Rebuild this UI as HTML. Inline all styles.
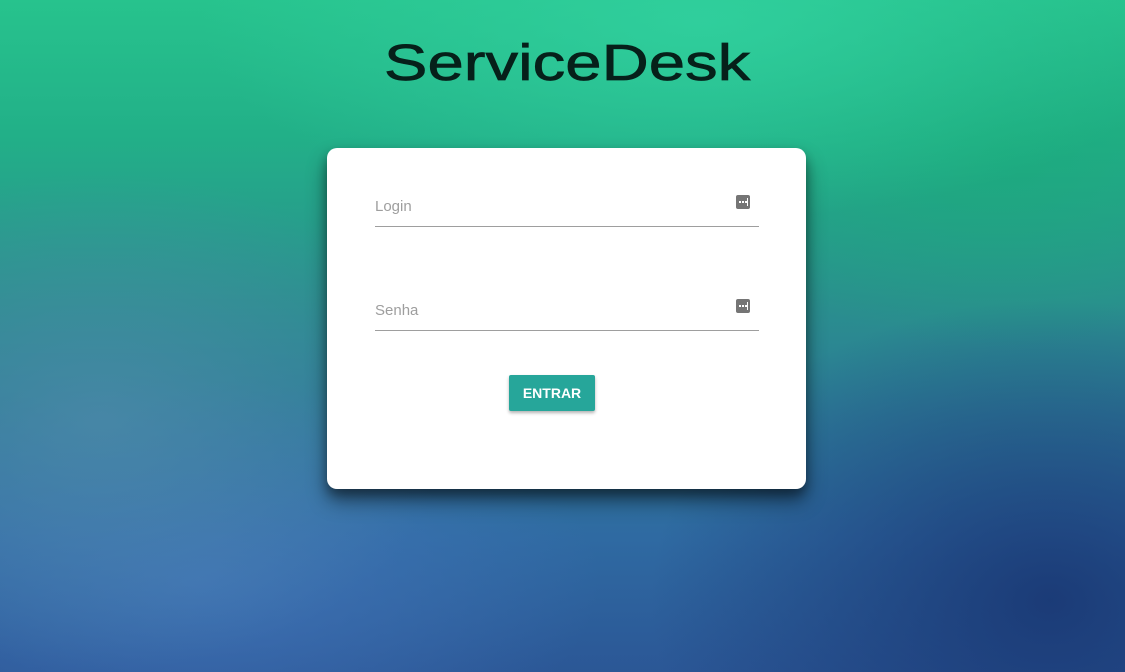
<!DOCTYPE html>
<html><head><meta charset="utf-8"><style>
html,body{margin:0;padding:0;width:1125px;height:672px;overflow:hidden;font-family:"Liberation Sans",sans-serif}
body{position:relative;background:
radial-gradient(ellipse 500px 200px at 700px 20px,rgba(50,210,160,.8),transparent),
radial-gradient(ellipse 350px 250px at 100px 420px,rgba(80,140,170,.7),transparent),
radial-gradient(ellipse 400px 200px at 200px 580px,rgba(70,120,190,.7),transparent),
radial-gradient(ellipse 400px 300px at 1050px 600px,rgba(25,55,115,.9),transparent),
radial-gradient(ellipse 300px 200px at 1000px 150px,rgba(25,170,120,.6),transparent),
linear-gradient(180deg,#27c38d 0%,#22b088 20%,#2a8f8e 45%,#2d7a98 62%,#2f6aa2 80%,#2b5796 100%);}
.title{position:absolute;left:383px;top:37px;width:368px;text-align:center;white-space:nowrap;font-size:51px;line-height:52px;color:#06201a}
.title span{display:inline-block;transform:scaleX(1.28);transform-origin:center;-webkit-text-stroke:0.7px #06201a}
.card{position:absolute;left:327px;top:148px;width:479px;height:341px;background:#fff;border-radius:10px;box-shadow:0 12px 20px rgba(0,0,0,.45),0 6px 10px rgba(0,0,0,.3)}
.f{position:absolute;left:48px;width:384px;height:30px;border-bottom:1px solid #9e9e9e;color:#9e9e9e;font-size:15px}
.f span{position:absolute;left:0;top:2px}
.ic{position:absolute;right:9px;top:-1px;width:14px;height:14px;background:#757575;border-radius:2px}
.ic i{position:absolute;top:6px;width:2px;height:2px;background:#fff}
.btn{position:absolute;left:182px;top:227px;width:86px;height:36px;background:#26a69a;color:#fff;font-size:14px;font-weight:bold;line-height:36px;text-align:center;border-radius:2px;box-shadow:0 2px 3px rgba(0,0,0,.3)}
</style></head><body>
<div class="title"><span>ServiceDesk</span></div>
<div class="card">
<div class="f" style="top:48px"><span>Login</span><div class="ic"><i style="left:3px"></i><i style="left:6px"></i><i style="left:9px"></i><i style="left:11px;top:3px;height:8px;width:1px"></i></div></div>
<div class="f" style="top:152px"><span>Senha</span><div class="ic"><i style="left:3px"></i><i style="left:6px"></i><i style="left:9px"></i><i style="left:11px;top:3px;height:8px;width:1px"></i></div></div>
<div class="btn">ENTRAR</div>
</div>
</body></html>
